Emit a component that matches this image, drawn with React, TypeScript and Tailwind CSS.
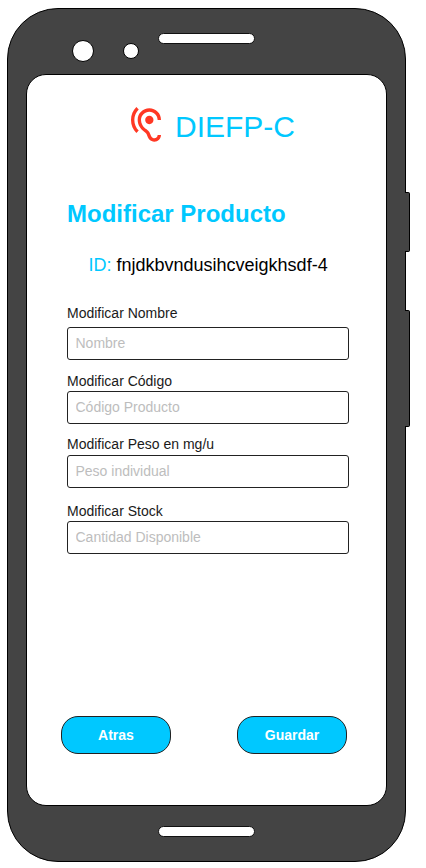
import React from "react";

const fields = [
  { label: "Modificar Nombre", placeholder: "Nombre", gap: "", inner: "mt-[6px]" },
  { label: "Modificar Código", placeholder: "Código Producto", gap: "mt-[13px]", inner: "mt-[2px]" },
  { label: "Modificar Peso en mg/u", placeholder: "Peso individual", gap: "mt-[12px]", inner: "mt-[3px]" },
  { label: "Modificar Stock", placeholder: "Cantidad Disponible", gap: "mt-[15px]", inner: "mt-[2px]" },
];

function EarIcon() {
  return (
    <svg viewBox="0 0 24 24" className="h-[40px] w-[40px]" fill="#ff3824" aria-hidden="true">
      <path d="M17 20c-.29 0-.56-.06-.76-.15-.71-.37-1.21-.88-1.71-2.38-.51-1.56-1.47-2.29-2.39-3-.79-.61-1.61-1.24-2.32-2.53C9.29 10.98 9 9.93 9 9c0-2.8 2.2-5 5-5s5 2.2 5 5h2c0-3.93-3.07-7-7-7S7 5.07 7 9c0 1.26.38 2.65 1.07 3.9.91 1.65 1.98 2.48 2.85 3.15.81.62 1.39 1.07 1.71 2.05.6 1.82 1.37 2.84 2.73 3.55.51.23 1.07.35 1.64.35 2.21 0 4-1.79 4-4h-2c0 1.1-.9 2-2 2zM7.64 2.64L6.22 1.22C4.23 3.21 3 5.96 3 9s1.23 5.79 3.22 7.78l1.41-1.41C6.01 13.74 5 11.49 5 9s1.01-4.74 2.64-6.36zM11.5 9c0 1.38 1.12 2.5 2.5 2.5s2.5-1.12 2.5-2.5-1.12-2.5-2.5-2.5-2.5 1.12-2.5 2.5z" />
    </svg>
  );
}

function ActionButton({ children }: { children: React.ReactNode }) {
  return (
    <button className="h-[38px] w-[110px] rounded-[17px] border border-[#222] bg-[#00c8ff] text-[14px] leading-[36px] font-bold text-white">
      {children}
    </button>
  );
}

export default function App() {
  return (
    <div className="h-[868px] w-[426px] overflow-hidden bg-white pt-[8px] pl-[7px] font-['Liberation_Sans',Arial,sans-serif]">
      <div className="relative h-[854px] w-[399px]">
        <div className="flex h-full w-full flex-col rounded-[51px] border border-black bg-[#444] px-[18px]">
          <div className="flex h-[65px] shrink-0 items-start">
            <div className="mt-[31px] ml-[46px] h-[22px] w-[22px] shrink-0 rounded-full border border-black bg-white" />
            <div className="mt-[34px] ml-[29px] h-[16px] w-[16px] shrink-0 rounded-full border border-black bg-white" />
            <div className="mt-[24px] ml-[19px] h-[11px] w-[97px] shrink-0 rounded-[5.5px] border border-[#111] bg-white" />
          </div>

          <main className="flex h-[732px] w-[361px] shrink-0 flex-col rounded-[20px] border border-black bg-white">
            <header className="mt-[30px] ml-[99px] flex h-[40px]">
              <EarIcon />
              <span className="mt-[5px] ml-[9px] text-[30px] leading-[34px] text-[#00c8ff]">DIEFP-C</span>
            </header>

            <h1 className="mt-[55px] ml-[40px] text-[24px] leading-[28px] font-bold text-[#00c8ff]">
              Modificar Producto
            </h1>
            <p className="mt-[27px] ml-[61.5px] text-[18px] leading-[20px] whitespace-nowrap text-black">
              <span className="text-[#00c8ff]">ID:</span> fnjdkbvndusihcveigkhsdf-4
            </p>

            <form className="mt-[30px] ml-[40px] w-[282px]">
              {fields.map((f) => (
                <label key={f.label} className={`block ${f.gap}`}>
                  <span className="block text-[14px] leading-[16px] text-[#1a1a1a]">{f.label}</span>
                  <input
                    type="text"
                    placeholder={f.placeholder}
                    className={`${f.inner} block h-[33px] w-full rounded-[3px] border border-[#222] bg-white px-[7.5px] pb-[2px] text-[14px] leading-[16px] placeholder:text-[#bdbdbd]`}
                  />
                </label>
              ))}
            </form>

            <div className="mt-[162px] ml-[34px] flex w-[286px] justify-between">
              <ActionButton>Atras</ActionButton>
              <ActionButton>Guardar</ActionButton>
            </div>
          </main>

          <div className="mt-[20px] ml-[132px] h-[11px] w-[97px] shrink-0 rounded-[5.5px] border border-[#111] bg-white" />
        </div>

        {/* Power and volume keys sit over the right edge of the case */}
        <div className="absolute top-[184px] left-[398px] h-[60px] w-[5px] rounded-r-[2px] border border-l-0 border-black bg-[#444]" />
        <div className="absolute top-[302px] left-[398px] h-[117px] w-[5px] rounded-r-[2px] border border-l-0 border-black bg-[#444]" />
      </div>
    </div>
  );
}
